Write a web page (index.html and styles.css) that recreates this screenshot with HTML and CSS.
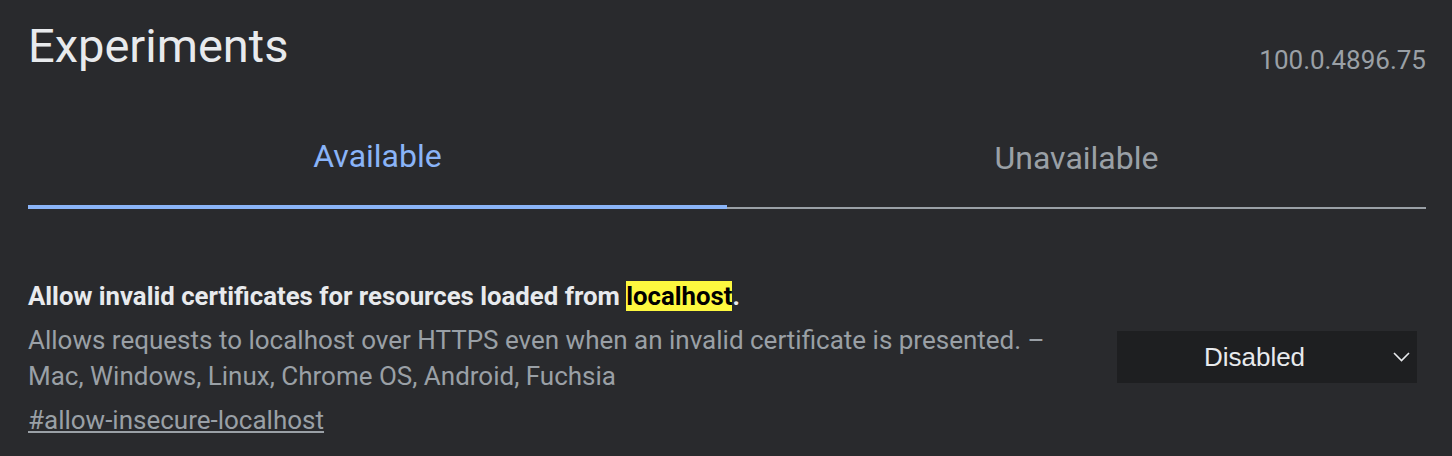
FILE: index.html
```html
<!DOCTYPE html>
<html>
<head>
    <title>Experiments</title>
    <link rel="stylesheet" href="styles.css">
</head>
<body>
    <div class="page">
        <div class="header">
            <h1>Experiments</h1>
            <span class="version">100.0.4896.75</span>
        </div>

        <div class="tabs">
            <div class="tab tab-active">Available</div>
            <div class="tab">Unavailable</div>
        </div>

        <div class="experiment">
            <div class="experiment-text">
                <h2 class="experiment-name">Allow invalid certificates for resources loaded from <mark>localhost</mark>.</h2>
                <p class="experiment-desc">Allows requests to localhost over HTTPS even when an invalid certificate is presented. – Mac, Windows, Linux, Chrome OS, Android, Fuchsia</p>
                <a class="permalink" href="#allow-insecure-localhost">#allow-insecure-localhost</a>
            </div>
            <div class="select">
                <span class="select-value">Disabled</span>
                <svg class="select-arrow" width="17" height="10" viewBox="0 0 17 10">
                    <polyline points="1,1 8.5,8.5 16,1" fill="none" stroke="#e8eaed" stroke-width="1.6"/>
                </svg>
            </div>
        </div>
    </div>
</body>
</html>
```

FILE: styles.css
```css
* {
    margin: 0;
    padding: 0;
    box-sizing: border-box;
}

body {
    background-color: #292a2d;
    font-family: Roboto, "Liberation Sans", sans-serif;
    overflow: hidden;
}

.page {
    padding: 18px 26px 0 28px;
}

.header {
    display: flex;
    justify-content: space-between;
    align-items: flex-start;
}

h1 {
    font-size: 47px;
    font-weight: 400;
    line-height: 56px;
    color: #e8eaed;
}

.version {
    margin-top: 26px;
    font-size: 26px;
    line-height: 32px;
    color: #9aa0a6;
}

.tabs {
    display: flex;
}

.tab {
    flex: 1;
    text-align: center;
    font-size: 32px;
    line-height: 40px;
    color: #9aa0a6;
    padding: 62px 0 29px;
    border-bottom: 2px solid #9aa0a6;
}

.tab-active {
    color: #8ab4f8;
    padding: 60px 0 29px;
    border-bottom: 4px solid #8ab4f8;
}

.experiment {
    display: flex;
    align-items: center;
    margin-top: 71px;
    padding-right: 9px;
}

.experiment-text {
    flex: 1;
}

.experiment-name {
    font-size: 25.75px;
    font-weight: 700;
    line-height: 32px;
    color: #e8eaed;
}

mark {
    background-color: #fdf83f;
    color: #000;
}

.experiment-desc {
    margin-top: 10px;
    font-size: 26px;
    line-height: 36px;
    color: #9aa0a6;
}

.permalink {
    display: inline-block;
    margin-top: 8px;
    font-size: 26px;
    line-height: 36px;
    color: #9aa0a6;
    text-decoration: underline;
}

.select {
    display: flex;
    align-items: center;
    width: 300px;
    height: 52px;
    margin-left: 40px;
    margin-bottom: 4px;
    padding: 0 7px 0 9px;
    background-color: #1e1f21;
}

.select-value {
    flex: 1;
    text-align: center;
    font-family: "Liberation Sans", Arial, sans-serif;
    font-size: 26px;
    color: #e8eaed;
}

.select-arrow {
    margin-left: 10px;
}
```
